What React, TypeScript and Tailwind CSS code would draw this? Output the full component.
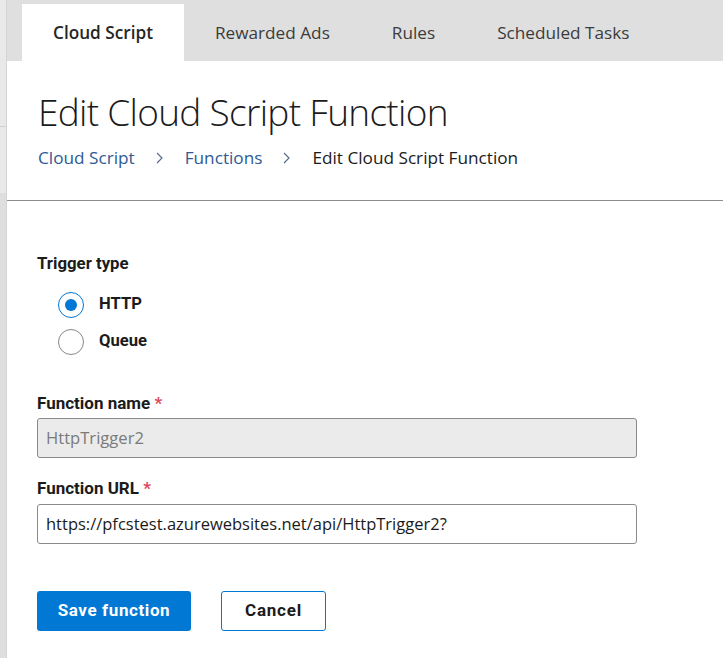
import React from "react";

const tabs = ["Cloud Script", "Rewarded Ads", "Rules", "Scheduled Tasks"];

function Radio({ checked, label }: { checked: boolean; label: string }) {
  return (
    <div className="flex items-center gap-[15px] h-[37px]">
      <span
        className={
          checked
            ? "w-[26px] h-[26px] rounded-full border border-[#0078d4] bg-white flex items-center justify-center"
            : "w-[26px] h-[26px] rounded-full border border-[#8a8886] bg-white flex items-center justify-center"
        }
      >
        {checked && <span className="w-[12px] h-[12px] rounded-full bg-[#0078d4]" />}
      </span>
      <span className="text-[16.6px] font-bold text-[#1b1b1b] [font-family:Roboto,sans-serif]">{label}</span>
    </div>
  );
}

function Label({ text }: { text: string }) {
  return (
    <div className="text-[17px] font-bold text-[#1b1b1b] [font-family:Roboto,sans-serif] leading-[20px]">
      {text} <span className="text-[#e0465e]">*</span>
    </div>
  );
}

export default function App() {
  return (
    <div className="w-[723px] h-[658px] flex bg-white overflow-hidden [font-family:'Open_Sans',sans-serif]">
      <div className="w-[7px] shrink-0 flex flex-col border-r border-[#d4d4d4]">
        <div className="h-[127px] bg-[#e9e9e9] border-b border-[#d0d0d0]" />
        <div className="h-[66px] bg-[#e9e9e9]" />
        <div className="flex-1 bg-[#dedede]" />
      </div>
      <div className="flex-1 flex flex-col">
        <div className="h-[61px] bg-[#dfdfdf] flex items-end pl-[15px]">
          {tabs.map((t, i) => (
            <div
              key={t}
              className={
                i === 0
                  ? "h-[57px] px-[31px] bg-white flex items-center text-[17.2px] font-semibold text-[#262626]"
                  : "h-[57px] px-[31px] flex items-center text-[17.2px] text-[#3b3b3b]"
              }
            >
              {t}
            </div>
          ))}
        </div>
        <div className="pl-[31px] pt-[27px] h-[140px] border-b border-[#8c8c8c]">
          <h1 className="text-[37px] font-light text-[#1b1b1b] leading-[48px] tracking-[-0.7px]">
            Edit Cloud Script Function
          </h1>
          <div className="flex items-center text-[17.2px] mt-[10px] leading-[24px]">
            <span className="text-[#2f5a95]">Cloud Script</span>
            <span className="mx-[20px] text-[#5a6b8c]">
              <svg width="10" height="16" viewBox="0 0 10 16" fill="none" stroke="currentColor" strokeWidth="1.2">
                <path d="M2 3l5 5-5 5" />
              </svg>
            </span>
            <span className="text-[#2f5a95]">Functions</span>
            <span className="mx-[20px] text-[#5a6b8c]">
              <svg width="10" height="16" viewBox="0 0 10 16" fill="none" stroke="currentColor" strokeWidth="1.2">
                <path d="M2 3l5 5-5 5" />
              </svg>
            </span>
            <span className="text-[#1b1b1b]">Edit Cloud Script Function</span>
          </div>
        </div>
        <div className="pl-[30px] pt-[52px]">
          <div className="text-[16.8px] font-bold text-[#1b1b1b] [font-family:Roboto,sans-serif] leading-[20px]">
            Trigger type
          </div>
          <div className="pl-[21px] mt-[13px] flex flex-col">
            <Radio checked label="HTTP" />
            <Radio checked={false} label="Queue" />
          </div>
          <div className="mt-[33px]">
            <Label text="Function name" />
            <div className="mt-[5px] w-[600px] h-[40px] rounded-[3px] border border-[#8a8a8a] bg-[#ebebeb] flex items-center px-[8px] text-[16.6px] text-[#7a7a7a]">
              HttpTrigger2
            </div>
          </div>
          <div className="mt-[20px]">
            <Label text="Function URL" />
            <div className="mt-[6px] w-[600px] h-[40px] rounded-[3px] border border-[#8a8a8a] bg-white flex items-center px-[8px] text-[16.5px] text-[#1b1b1b]">
              https://pfcstest.azurewebsites.net/api/HttpTrigger2?
            </div>
          </div>
          <div className="mt-[47px] flex gap-[30px]">
            <button className="w-[154px] h-[40px] rounded-[3px] bg-[#0078d4] text-white text-[17px] font-bold [font-family:Roboto,sans-serif] tracking-[0.6px]">
              Save function
            </button>
            <button className="w-[105px] h-[40px] rounded-[3px] border border-[#0078d4] bg-white text-[#1b1b1b] text-[17px] font-bold [font-family:Roboto,sans-serif] tracking-[0.8px]">
              Cancel
            </button>
          </div>
        </div>
      </div>
    </div>
  );
}
